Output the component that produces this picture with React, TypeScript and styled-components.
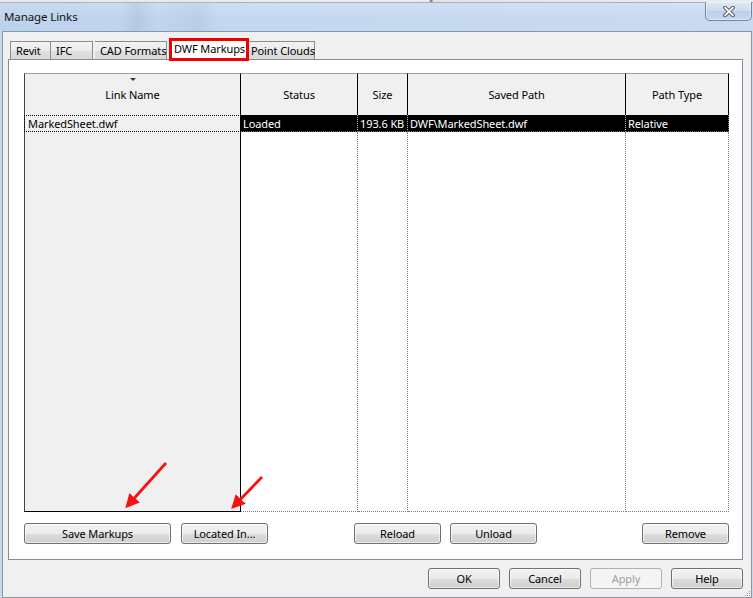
import React from 'react'

import styled, { createGlobalStyle, css } from 'styled-components'

const GlobalStyle = createGlobalStyle`
  html, body {
    margin: 0;
    padding: 0;
    background: #f0f0f0;
  }
  body {
    font-family: "Noto Sans", "Segoe UI", sans-serif;
    font-size: 11px;
    letter-spacing: -0.1px;
    color: #000;
  }
  * {
    box-sizing: border-box;
  }
`

const tabs = [
  { label: 'Revit', width: 41, gap: 0, pad: 5 },
  { label: 'IFC', width: 42, gap: 0, pad: 5 },
  { label: 'CAD Formats', width: 72, gap: 2, pad: 5 },
  { label: 'DWF Markups', width: 80, gap: 2, pad: 2, active: true },
  { label: 'Point Clouds', width: 66, gap: 0, pad: 2 },
]

const columns = [
  { title: 'Link Name', width: 217, value: 'MarkedSheet.dwf', frozen: true },
  { title: 'Status', width: 117, value: 'Loaded' },
  { title: 'Size', width: 50, value: '193.6 KB' },
  { title: 'Saved Path', width: 218, value: 'DWF\\MarkedSheet.dwf' },
  { title: 'Path Type', width: 103, value: 'Relative' },
]

const ManageLinks = () => {
  return (
    <Window>
      <BehindStrip />

      {/* TITLE BAR */}
      <TitleBar>
        <Caption>Manage Links</Caption>
        <CloseButton>
          <svg width="12" height="11" viewBox="0 0 12 11">
            <path d="M2 1.5 L10 9.5 M10 1.5 L2 9.5" stroke="#3a3f47" strokeWidth="3.6" strokeLinecap="round" />
            <path d="M2 1.5 L10 9.5 M10 1.5 L2 9.5" stroke="#fff" strokeWidth="1.8" strokeLinecap="round" />
          </svg>
        </CloseButton>
      </TitleBar>

      <Client>
        {/* TABS */}
        <TabStrip>
          {tabs.map((t) => (
            <Tab key={t.label} $width={t.width} $gap={t.gap} $pad={t.pad} $active={!!t.active}>
              {t.label}
            </Tab>
          ))}
        </TabStrip>

        <Panel>
          {/* LINKS GRID */}
          <Grid $cols={columns.map((c) => c.width + 'px').join(' ')}>
            {columns.map((c, i) => (
              <HeaderCell key={c.title} $first={i === 0}>
                {i === 0 && <SortMark />}
                {c.title}
              </HeaderCell>
            ))}
            {columns.map((c, i) =>
              c.frozen ? (
                <FocusCell key={c.title}>{c.value}</FocusCell>
              ) : (
                <SelectedCell key={c.title} $last={i === columns.length - 1}>
                  {c.value}
                </SelectedCell>
              ),
            )}
            {columns.map((c) => (
              <FillCell key={c.title} $frozen={!!c.frozen} />
            ))}
          </Grid>

          <ButtonRow>
            <Button $width={147}>Save Markups</Button>
            <Button $width={87} $gap={10}>Located In...</Button>
            <Button $width={87} $gap={86}>Reload</Button>
            <Button $width={87} $gap={9}>Unload</Button>
            <Button $width={87} $push>Remove</Button>
          </ButtonRow>
        </Panel>

        {/* DIALOG BUTTONS */}
        <Footer>
          <Button $width={72}>OK</Button>
          <Button $width={72}>Cancel</Button>
          <Button $width={72} disabled>
            Apply
          </Button>
          <Button $width={72}>Help</Button>
        </Footer>

        <Grip width="7" height="7" viewBox="0 0 7 7">
          <rect x="5" y="1" width="1" height="1" fill="#9a9a9a" />
          <rect x="3" y="3" width="1" height="1" fill="#9a9a9a" />
          <rect x="5" y="3" width="1" height="1" fill="#9a9a9a" />
          <rect x="1" y="5" width="1" height="1" fill="#9a9a9a" />
          <rect x="3" y="5" width="1" height="1" fill="#9a9a9a" />
          <rect x="5" y="5" width="1" height="1" fill="#9a9a9a" />
        </Grip>
      </Client>

      {/* callout arrows */}
      <Callouts width="753" height="598" viewBox="0 0 753 598">
        <defs>
          <marker id="head" markerWidth="5" markerHeight="5" refX="3" refY="2.5" orient="auto" markerUnits="strokeWidth">
            <path d="M0 0 L5 2.5 L0 5 Z" fill="#f51212" />
          </marker>
        </defs>
        <line x1="166" y1="463" x2="129" y2="504" stroke="#f51212" strokeWidth="2.8" markerEnd="url(#head)" />
        <line x1="262" y1="477" x2="235" y2="505" stroke="#f51212" strokeWidth="2.8" markerEnd="url(#head)" />
      </Callouts>
    </Window>
  )
}

const App = () => (
  <>
    <GlobalStyle />
    <ManageLinks />
  </>
)

export default App

const Window = styled.div`
  position: relative;
  width: 753px;
  height: 598px;
  display: flex;
  flex-direction: column;
  overflow: hidden;
  background: #c9d9ee;
`

const BehindStrip = styled.div`
  height: 3px;
  background: linear-gradient(to right, #e9eaec 0%, #e9eaec 57%, #6d6d6d 57.2%, #e3e4e6 57.6%, #ececec 100%);
  border-bottom: 1px solid #a9b3bf;
`

const TitleBar = styled.div`
  height: 28px;
  display: flex;
  align-items: flex-start;
  justify-content: space-between;
  padding-left: 4px;
  padding-right: 1px;
  background:
    linear-gradient(to bottom, rgba(255, 255, 255, 0.18), rgba(255, 255, 255, 0) 60%),
    linear-gradient(
      to right,
      #bdd2ed 0%,
      #c0d4ee 16%,
      #b3c8e3 18%,
      #c1d5ee 21%,
      #b9cde8 26.5%,
      #c3d7f0 29%,
      #c6d9f1 70%,
      #c9dbf2 100%
    );
`

const Caption = styled.span`
  margin-top: 6px;
  font-size: 11.5px;
  color: #111;
`

const CloseButton = styled.div`
  width: 47px;
  height: 19px;
  margin-top: -1px;
  display: flex;
  align-items: center;
  justify-content: center;
  border: 1px solid #75849a;
  border-top: none;
  border-radius: 0 0 5px 5px;
  background: linear-gradient(to bottom, #dce8f6 0%, #cadaef 50%, #bccfe9 51%, #c7d8ef 100%);
  box-shadow: inset 0 0 0 1px rgba(255, 255, 255, 0.45);
`

const Client = styled.div`
  position: relative;
  flex: 1;
  display: flex;
  flex-direction: column;
  margin: 0 1px 0 2px;
  background: #f0f0f0;
  border: 1px solid #8b96a4;
`

const TabStrip = styled.div`
  position: relative;
  z-index: 1;
  height: 27px;
  display: flex;
  align-items: flex-end;
  padding-left: 7px;
`

const Tab = styled.div`
  width: ${(p) => p.$width}px;
  margin-left: ${(p) => p.$gap}px;
  height: 18px;
  display: flex;
  align-items: center;
  padding: 0 0 1px ${(p) => p.$pad}px;
  white-space: nowrap;
  border: 1px solid #898c95;
  border-bottom: none;
  background: linear-gradient(to bottom, #f3f3f3 0%, #ebebeb 50%, #dfdfdf 51%, #d9d9d9 100%);

  & + & {
    border-left: none;
  }

  ${(p) =>
    p.$active &&
    css`
      height: 23px;
      margin-bottom: -2px;
      padding-bottom: 3px;
      border: 3px solid #f00000 !important;
      background: #fff;
    `}
`

const Panel = styled.div`
  height: 501px;
  margin: 0 8px 0 5px;
  padding: 13px 12px 15px 15px;
  display: flex;
  flex-direction: column;
  background: #fff;
  border: 1px solid #898c95;
`

const Grid = styled.div`
  height: 439px;
  display: grid;
  grid-template-columns: ${(p) => p.$cols};
  grid-template-rows: 42px 17px 1fr;
`

const HeaderCell = styled.div`
  position: relative;
  display: flex;
  align-items: center;
  justify-content: center;
  background: #f0f0f0;
  border-top: 1px solid #a0a0a0;
  border-right: 1px solid #000;
  ${(p) =>
    p.$first &&
    css`
      border-left: 1px solid #444;
    `}
`

const SortMark = styled.span`
  position: absolute;
  top: 4px;
  left: 50%;
  margin-left: -3px;
  border-left: 3px solid transparent;
  border-right: 3px solid transparent;
  border-top: 3px solid #333;
`

const FocusCell = styled.div`
  display: flex;
  align-items: center;
  padding-left: 3px;
  background: #f0f0f0;
  border-left: 1px solid #444;
  border-right: 1px solid #000;
  outline: 1px dotted #000;
  outline-offset: -1px;
  white-space: nowrap;
`

const SelectedCell = styled.div`
  display: flex;
  align-items: center;
  padding-left: 2px;
  background: #000;
  color: #fff;
  white-space: nowrap;
  overflow: hidden;
  border-right: 1px dotted ${(p) => (p.$last ? '#888' : '#bbb')};
  border-bottom: 1px dotted #666;
`

const FillCell = styled.div`
  background: #fff;
  border-right: 1px dotted #808080;
  border-bottom: 1px dotted #808080;

  ${(p) =>
    p.$frozen &&
    css`
      background: #f0f0f0;
      border-left: 1px solid #444;
      border-right: 1px solid #000;
      border-bottom: 1px solid #000;
    `}
`

const ButtonRow = styled.div`
  display: flex;
  margin-top: 11px;
  margin-right: 1px;
`

const Button = styled.button`
  width: ${(p) => p.$width}px;
  height: 21px;
  margin-left: ${(p) => (p.$push ? 'auto' : (p.$gap || 0) + 'px')};
  padding: 0 0 1px;
  font-family: inherit;
  font-size: 11px;
  letter-spacing: -0.1px;
  color: #000;
  border: 1px solid #707070;
  border-radius: 3px;
  background: linear-gradient(to bottom, #f2f2f2 0%, #ebebeb 50%, #dddddd 51%, #cfcfcf 100%);
  box-shadow: inset 0 0 0 1px rgba(255, 255, 255, 0.6);

  &:disabled {
    color: #a0a0a0;
    border-color: #adb2b5;
    background: #f4f4f4;
    box-shadow: none;
  }
`

const Footer = styled.div`
  flex: 1;
  display: flex;
  justify-content: flex-end;
  align-items: flex-start;
  gap: 9px;
  padding: 8px 8px 0 0;
`

const Grip = styled.svg`
  position: absolute;
  right: 0;
  bottom: 0;
`

const Callouts = styled.svg`
  position: absolute;
  top: 0;
  left: 0;
  z-index: 5;
  pointer-events: none;
`
